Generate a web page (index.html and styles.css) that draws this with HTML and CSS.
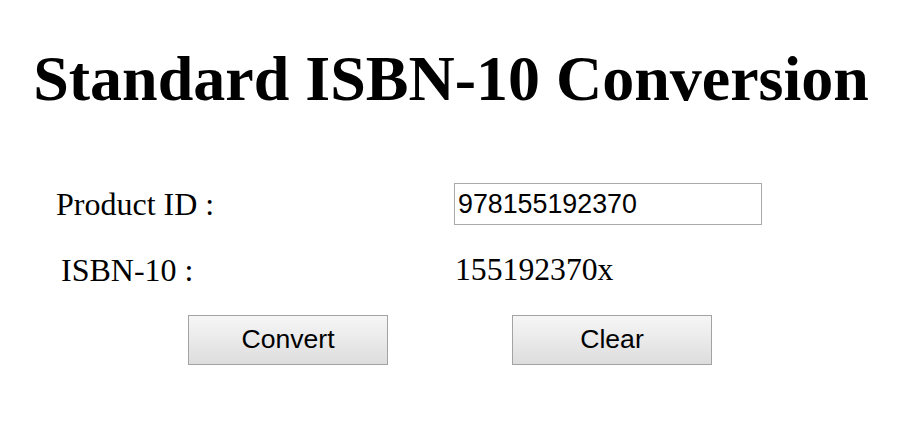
FILE: index.html
```html
<!DOCTYPE html>
<html lang="en">
<head>
<meta charset="utf-8">
<title>Standard ISBN-10 Conversion</title>
<link rel="stylesheet" href="styles.css">
</head>
<body>
<h1 class="title">Standard ISBN-10 Conversion</h1>
<form class="converter">
  <div class="fields">
    <label class="label" for="pid">Product ID :</label>
    <input class="field-input" id="pid" type="text" value="978155192370">
    <span class="label label-isbn">ISBN-10 :</span>
    <span class="result">155192370x</span>
  </div>
  <div class="actions">
    <button type="button" class="btn">Convert</button>
    <button type="reset" class="btn">Clear</button>
  </div>
</form>
</body>
</html>
```
FILE: styles.css
```css
html, body {
  margin: 0;
  padding: 0;
  background: #ffffff;
}

body {
  font-family: "Liberation Serif", "Times New Roman", serif;
  color: #000000;
}

.title {
  margin: 43px 0 0;
  font-size: 64px;
  font-weight: bold;
  line-height: 71px;
  text-align: center;
}

.converter {
  margin: 69px 0 0;
}

.fields {
  display: grid;
  grid-template-columns: 398px 308px;
  grid-auto-rows: 42px;
  row-gap: 24px;
  align-items: center;
  padding-left: 56px;
}

.label {
  font-size: 32px;
  line-height: normal;
}

.label-isbn {
  padding-left: 5px;
}

.result {
  font-size: 31.7px;
  line-height: normal;
  margin-left: 1px;
}

.field-input {
  box-sizing: border-box;
  width: 308px;
  height: 42px;
  margin: 0;
  padding: 1px 3px;
  border: 1px solid #a9a9a9;
  font-family: "Liberation Sans", Arial, sans-serif;
  font-size: 26.8px;
  color: #000000;
  background: #ffffff;
  outline: none;
}

.actions {
  display: flex;
  justify-content: center;
  gap: 124px;
  margin-top: 24px;
  padding-right: 2px;
}

.btn {
  box-sizing: border-box;
  width: 200px;
  height: 50px;
  margin: 0;
  padding: 0 0 2px;
  border: 1px solid #a3a3a3;
  background: linear-gradient(to bottom, #f6f6f6, #dddddd);
  font-family: "Liberation Sans", Arial, sans-serif;
  font-size: 26.6px;
  color: #000000;
}
```
